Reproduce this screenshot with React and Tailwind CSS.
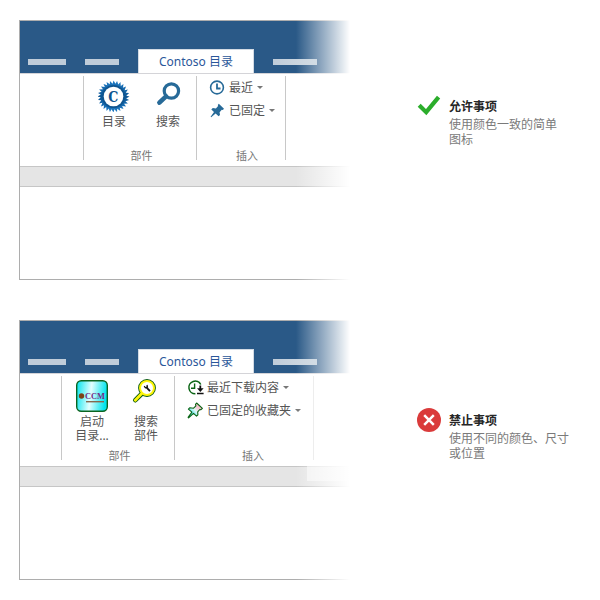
import React from "react";

const sawTeeth = (cx, cy, outer, inner, count) => {
  const points = [];
  for (let i = 0; i < count; i += 1) {
    const step = (Math.PI * 2) / count;
    const tip = i * step - Math.PI / 2;
    const root = tip + step * 0.7;
    points.push(`${(cx + outer * Math.cos(tip)).toFixed(2)},${(cy + outer * Math.sin(tip)).toFixed(2)}`);
    points.push(`${(cx + inner * Math.cos(root)).toFixed(2)},${(cy + inner * Math.sin(root)).toFixed(2)}`);
  }
  return points.join(" ");
};

function GearIcon() {
  return (
    <svg className="h-8 w-8" viewBox="0 0 32 32" aria-hidden="true">
      <defs>
        <linearGradient id="gear" x1="0" y1="0" x2="0" y2="1">
          <stop offset="0" stopColor="#1f7cc6" />
          <stop offset="0.5" stopColor="#0d5694" />
          <stop offset="1" stopColor="#1f7cc6" />
        </linearGradient>
      </defs>
      <polygon points={sawTeeth(15.5, 16.5, 16, 12.8, 28)} fill="url(#gear)" />
      <circle cx="15.5" cy="16.5" r="11.6" fill="#0f5590" />
      <circle cx="15.5" cy="16.5" r="9.8" fill="#fff" />
      <text x="15.3" y="22" textAnchor="middle" fontFamily="'DejaVu Serif Condensed','DejaVu Serif',serif" fontWeight="700" fontSize="14" fill="#0f5590">C</text>
    </svg>
  );
}

function SearchIcon() {
  return (
    <svg className="h-8 w-8" viewBox="0 0 32 32" fill="none" stroke="#276a98" aria-hidden="true">
      <circle cx="19.4" cy="11" r="7.2" strokeWidth="3.2" />
      <path d="M14 16.4 L7.4 22.6" strokeWidth="4.6" strokeLinecap="round" />
    </svg>
  );
}

function CatalogIcon() {
  return (
    <svg className="h-8 w-8" viewBox="0 0 32 32" aria-hidden="true">
      <defs>
        <linearGradient id="aqua" x1="0" y1="0" x2="1" y2="0.12">
          <stop offset="0" stopColor="#00e4ee" />
          <stop offset="0.5" stopColor="#e2ffff" />
          <stop offset="1" stopColor="#00e4ee" />
        </linearGradient>
      </defs>
      <rect x="0.7" y="0.7" width="30.6" height="30.6" rx="4.5" fill="url(#aqua)" stroke="#0a6420" strokeWidth="1.4" />
      <circle cx="5.5" cy="16" r="2.7" fill="#7c4214" />
      <text x="9" y="19" fontFamily="'Liberation Serif',serif" fontWeight="700" fontSize="8.4" fill="#742a86">CCM</text>
      <path d="M10 21.7 H28" stroke="#84694f" strokeWidth="1.4" />
    </svg>
  );
}

function WrenchSearchIcon() {
  return (
    <svg className="h-8 w-8 overflow-visible" viewBox="0 0 32 32" fill="none" aria-hidden="true">
      <path d="M11.5 14 L5.3 20.2" stroke="#0a5a10" strokeWidth="4.6" strokeLinecap="round" />
      <circle cx="17" cy="8" r="7" stroke="#0a5a10" strokeWidth="3.8" />
      <circle cx="17" cy="8" r="7" stroke="#fff60a" strokeWidth="2" fill="#fff" />
      <path d="M11.8 13.6 L5.3 20.2" stroke="#fff60a" strokeWidth="2.8" strokeLinecap="round" />
      <path d="M16.2 7.2 L20 11.2" stroke="#111" strokeWidth="1.8" />
      <path d="M14.2 6.2 L15.4 7.8 L17.4 7 L17 5" stroke="#111" strokeWidth="1.3" />
    </svg>
  );
}

function ClockIcon() {
  return (
    <svg className="h-4 w-4" viewBox="0 0 16 16" fill="none" stroke="#276a98" aria-hidden="true">
      <circle cx="8" cy="7.5" r="6.4" strokeWidth="1.6" />
      <path d="M8 3.5 V8.5 H11.5" strokeWidth="1.8" />
    </svg>
  );
}

function PinIcon() {
  return (
    <svg className="h-4 w-4" viewBox="0 0 16 16" aria-hidden="true">
      <path d="M9.8 0.8 L15 5.8 L13.8 7 L12.8 6.8 L10.6 9.2 L11 12 L9.6 13.2 L6.6 10.6 L2.2 14.3 L1.6 13.8 L5 9 L2.3 6.4 L3.8 5 L6.9 5.4 L9.1 3.1 L8.8 1.9 Z" fill="#276a98" />
    </svg>
  );
}

function ClockDownloadIcon() {
  return (
    <svg className="h-4 w-4 overflow-visible" viewBox="0 0 16 16" fill="none" aria-hidden="true">
      <path d="M13.8 4.5 A6.3 6.3 0 1 0 8.4 13.7" stroke="#0a6414" strokeWidth="1.5" />
      <path d="M7.6 3.6 V8.2 H4" stroke="#0a6414" strokeWidth="1.4" />
      <path d="M13.3 5.5 V10" stroke="#111" strokeWidth="1.8" />
      <path d="M10 8.2 L13.3 12 L16.6 8.2 Z" fill="#111" />
      <path d="M10 13.5 H16.6" stroke="#111" strokeWidth="1.5" />
    </svg>
  );
}

function ColorPinIcon() {
  return (
    <svg className="h-4 w-4 overflow-visible" viewBox="0 0 16 16" aria-hidden="true">
      <defs>
        <linearGradient id="pin" x1="0" y1="1" x2="1" y2="0">
          <stop offset="0.25" stopColor="#4be6ee" />
          <stop offset="0.5" stopColor="#e2f6f6" />
          <stop offset="0.7" stopColor="#f6c4d0" />
          <stop offset="1" stopColor="#ee9db2" />
        </linearGradient>
      </defs>
      <path d="M9.6 0 L15.4 5.3 L14 6.7 L12.8 6.5 L10.7 8.9 L10.9 11.9 L9.5 13.1 L6.5 10.4 L1.6 14.8 L1.1 14.3 L4.9 9.2 L1.4 6.2 L2.9 4.7 L6.6 5.2 L8.9 2.8 L8.5 1.3 Z" fill="url(#pin)" stroke="#0a6414" strokeWidth="1.1" strokeLinejoin="round" />
    </svg>
  );
}

function CheckIcon() {
  return (
    <svg className="h-6 w-6 shrink-0" viewBox="0 0 24 24" fill="none" aria-hidden="true">
      <path d="M2.2 11.2 L9.2 18.2 L21.6 3.2" stroke="#2bad2b" strokeWidth="4.2" />
    </svg>
  );
}

function CrossIcon() {
  return (
    <svg className="h-6 w-6 shrink-0" viewBox="0 0 24 24" aria-hidden="true">
      <circle cx="12" cy="12" r="12" fill="#da3b3b" />
      <path d="M7.2 7.2 L16.8 16.8 M16.8 7.2 L7.2 16.8" stroke="#fff" strokeWidth="2.5" />
    </svg>
  );
}

function LargeButton({ icon, lines }) {
  return (
    <button type="button" className="flex w-[54px] flex-col items-center gap-[3px] text-xs leading-[14px] text-[#555]">
      {icon}
      <span>
        {lines.map((line) => (
          <span key={line} className="block">{line}</span>
        ))}
      </span>
    </button>
  );
}

function MenuButton({ icon, label }) {
  return (
    <button type="button" className="flex h-[23px] items-center gap-1 text-xs text-[#555]">
      {icon}
      <span>{label}</span>
      <svg className="h-[3px] w-[6px]" viewBox="0 0 6 3" aria-hidden="true">
        <path d="M0 0 H6 L3 3 Z" fill="#777" />
      </svg>
    </button>
  );
}

function GroupLabel({ children }) {
  return <h3 className="text-center text-[11px] leading-[9px] text-[#777]">{children}</h3>;
}

function Ribbon({ leadClass, insertClass, insertLabelClass, large, menu, washed }) {
  return (
    <section className="relative h-[260px] min-w-[331px] flex-1 border border-r-0 border-[#adadad] bg-white">
      <nav className="flex h-[52px] items-end gap-[19px] bg-[#2a5987] pl-2">
        <span className="mb-2 h-[6px] w-[38px] bg-[#bfccd9]" />
        <span className="mb-2 h-[6px] w-[34px] bg-[#bfccd9]" />
        <button type="button" className="h-6 w-[116px] border-x border-t border-[#d3dbe4] bg-white text-[12px] leading-[22px] text-[#2b579a]">
          Contoso 目录
        </button>
        <span className="relative z-10 mb-2 h-[6px] w-[44px] bg-gradient-to-r from-[#bfccd9] to-[#d3dde5]" />
      </nav>
      <div className="flex h-[93px] border-t border-[#d4d4d8] pt-[2px] pb-[6px]">
        <div className={leadClass} />
        <div className="flex w-[113px] flex-col justify-between border-l border-[#c8c8c8] pt-1 pl-[3px]">
          <div className="flex">
            {large.map((item) => (
              <LargeButton key={item.lines[0]} {...item} />
            ))}
          </div>
          <GroupLabel>部件</GroupLabel>
        </div>
        <div className={insertClass}>
          <div className="pl-3">
            {menu.map((item) => (
              <MenuButton key={item.label} {...item} />
            ))}
          </div>
          <div className={insertLabelClass}>
            <GroupLabel>插入</GroupLabel>
          </div>
        </div>
      </div>
      <div className="h-[21px] border-y border-[#c6c6c6] bg-[#e5e5e5]" />
      {washed && <div className="absolute top-[53px] right-0 h-[107px] w-[43px] bg-white/50" />}
      <div className="absolute -inset-y-px right-0 w-[54px] bg-gradient-to-r from-white/0 to-white" />
    </section>
  );
}

function Advice({ icon, title, lines, className }) {
  return (
    <aside className={className}>
      {icon}
      <div className="pt-1">
        <h2 className="text-xs leading-[18px] font-bold text-[#262626]">{title}</h2>
        <p className="pt-px text-xs leading-[15px] text-[#7a7a7a]">
          {lines.map((line) => (
            <span key={line} className="block">{line}</span>
          ))}
        </p>
      </div>
    </aside>
  );
}

export default function App() {
  return (
    <main className="flex flex-col gap-10 bg-white py-5 pl-[19px] font-['Noto_Sans','Noto_Sans_CJK_SC',sans-serif]">
      <div className="flex items-start gap-[67px]">
        <Ribbon
          leadClass="w-[63px]"
          insertClass="flex w-[90px] flex-col justify-between border-x border-[#c8c8c8]"
          insertLabelClass="pl-3"
          large={[
            { icon: <GearIcon />, lines: ["目录"] },
            { icon: <SearchIcon />, lines: ["搜索"] },
          ]}
          menu={[
            { icon: <ClockIcon />, label: "最近" },
            { icon: <PinIcon />, label: "已固定" },
          ]}
        />
        <Advice className="flex w-[183px] gap-2 pt-[74px]" icon={<CheckIcon />} title="允许事项" lines={["使用颜色一致的简单", "图标"]} />
      </div>
      <div className="flex items-start gap-[67px]">
        <Ribbon
          leadClass="w-[41px]"
          insertClass="flex w-[140px] flex-col justify-between border-x border-[#c8c8c8]"
          insertLabelClass="pl-[18px]"
          washed
          large={[
            { icon: <CatalogIcon />, lines: ["启动", "目录..."] },
            { icon: <WrenchSearchIcon />, lines: ["搜索", "部件"] },
          ]}
          menu={[
            { icon: <ClockDownloadIcon />, label: "最近下载内容" },
            { icon: <ColorPinIcon />, label: "已固定的收藏夹" },
          ]}
        />
        <Advice className="flex w-[183px] gap-2 pt-[88px]" icon={<CrossIcon />} title="禁止事项" lines={["使用不同的颜色、尺寸", "或位置"]} />
      </div>
    </main>
  );
}
